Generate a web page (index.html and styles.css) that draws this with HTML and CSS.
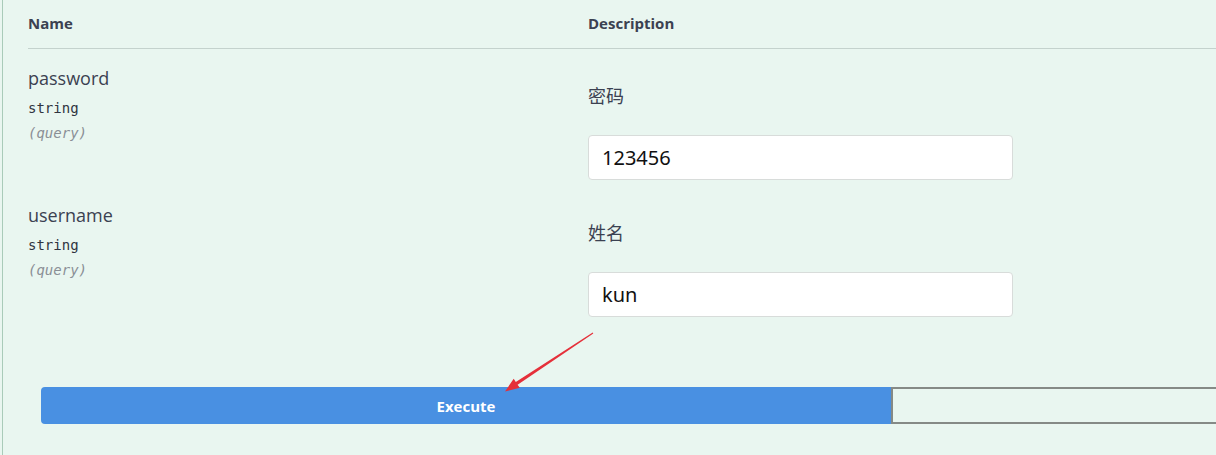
FILE: index.html
```html
<!DOCTYPE html>
<html lang="zh">
<head>
<meta charset="utf-8">
<title>Parameters</title>
<link rel="stylesheet" href="styles.css">
</head>
<body>
<div class="opblock">
  <div class="params">
    <div class="head-cell">Name</div>
    <div class="head-cell">Description</div>

    <div class="name-cell">
      <div class="pname">password</div>
      <div class="ptype">string</div>
      <div class="pin">(query)</div>
    </div>
    <div class="desc-cell">
      <div class="pdesc">密码</div>
      <input class="pinput" type="text" value="123456">
    </div>

    <div class="name-cell">
      <div class="pname">username</div>
      <div class="ptype">string</div>
      <div class="pin">(query)</div>
    </div>
    <div class="desc-cell">
      <div class="pdesc">姓名</div>
      <input class="pinput" type="text" value="kun">
    </div>
  </div>

  <div class="btn-group">
    <button class="btn execute">Execute</button>
    <button class="btn clear" aria-label="Clear"></button>
  </div>

  <svg class="annot-arrow" width="110" height="75" viewBox="0 0 110 75">
    <polygon fill="#e5303a" points="98.3,8.4 22.6,59.7 24.8,62.8 10,66.5 18.7,53.8 20.8,56.9 97.7,7.6"/>
  </svg>
</div>
</body>
</html>
```

FILE: styles.css
```css
html, body {
  margin: 0;
  padding: 0;
  background: #e9f6f0;
  overflow: hidden;
}

body {
  width: 1216px;
  height: 455px;
}

.opblock {
  position: relative;
  margin-left: 2px;
  height: 455px;
  border-left: 1px solid #a9cbb9;
  background: #e9f6f0;
  color: #3b4151;
  font-family: "Open Sans", "Noto Sans", sans-serif;
}

.params {
  display: grid;
  grid-template-columns: 560px 1fr;
  margin-left: 25px;
}

.head-cell {
  height: 49px;
  line-height: 47px;
  font-size: 15px;
  font-weight: 700;
  border-bottom: 1px solid #c4d2cd;
  box-sizing: border-box;
  color: #3b4151;
}

.name-cell {
  height: 137px;
  padding-top: 17px;
  box-sizing: border-box;
}

.pname {
  font-size: 18px;
  line-height: 24px;
  color: #3b4151;
}

.ptype {
  margin-top: 8px;
  font-family: "DejaVu Sans Mono", "Liberation Mono", monospace;
  font-size: 14px;
  line-height: 20px;
  color: #2f3440;
}

.pin {
  margin-top: 5px;
  font-family: "DejaVu Sans Mono", "Liberation Mono", monospace;
  font-style: italic;
  font-size: 14px;
  line-height: 20px;
  color: #8a8f96;
}

.desc-cell {
  height: 137px;
  padding-top: 34px;
  box-sizing: border-box;
}

.pdesc {
  font-family: "Noto Sans CJK SC", "Noto Sans", sans-serif;
  font-size: 18px;
  line-height: 24px;
  color: #3b4151;
}

.pinput {
  display: block;
  margin-top: 28px;
  width: 425px;
  height: 45px;
  box-sizing: border-box;
  padding: 0 13px;
  background: #fff;
  border: 1px solid #d8dcda;
  border-radius: 4px;
  font-family: "Noto Sans", sans-serif;
  font-size: 20px;
  color: #111;
  outline: none;
}

.btn-group {
  display: flex;
  margin-top: 64px;
  margin-left: 38px;
  width: 1700px;
}

.btn {
  flex: 1;
  height: 37px;
  box-sizing: border-box;
  font-family: "Open Sans", "Noto Sans", sans-serif;
  font-size: 15px;
  font-weight: 700;
  cursor: pointer;
}

.execute {
  background: #4990e2;
  border: 2px solid #4990e2;
  border-radius: 4px 0 0 4px;
  color: #fff;
}

.clear {
  background: transparent;
  border: 2px solid #858a86;
  border-radius: 0 4px 4px 0;
  color: #3b4151;
}

.annot-arrow {
  position: absolute;
  left: 492px;
  top: 325px;
}
```
